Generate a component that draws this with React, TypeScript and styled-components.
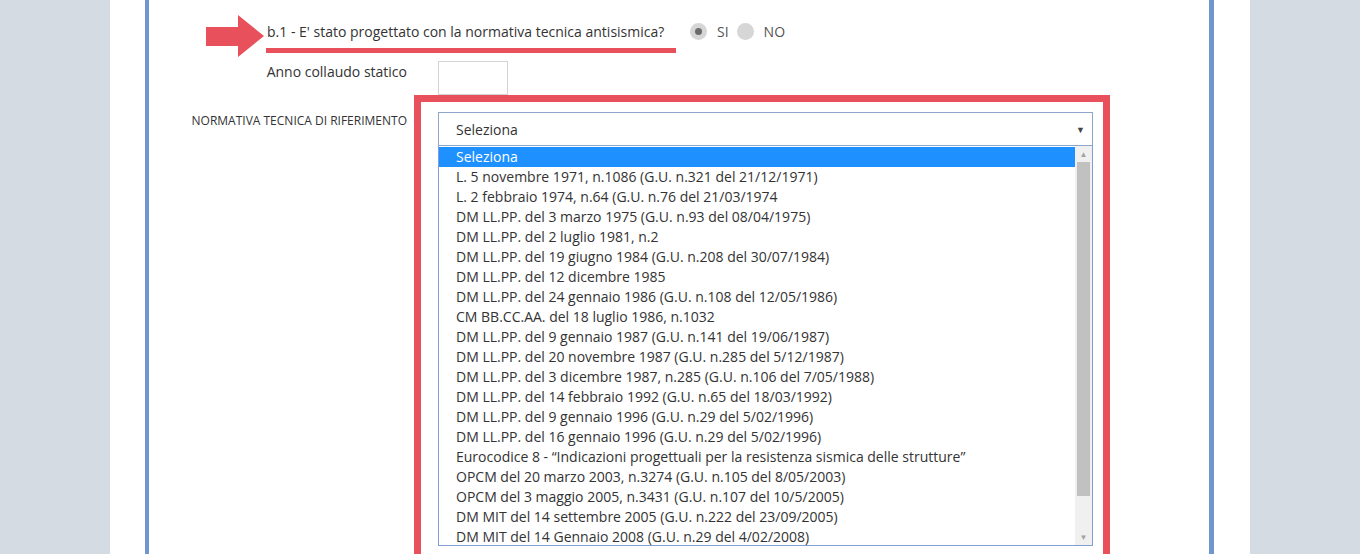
import { createGlobalStyle, styled } from "styled-components";

const GlobalStyle = createGlobalStyle`
  html, body {
    margin: 0;
    padding: 0;
    background: #d5dbe3;
    font-family: "Open Sans", "Liberation Sans", sans-serif;
    color: #333;
  }
  * { box-sizing: border-box; }
`;

const Page = styled.div`
  width: 1140px;
  height: 554px;
  margin: 0 auto;
  background: #fff;
  overflow: hidden;
`;

const Panel = styled.div`
  margin-left: 35px;
  width: 1069px;
  height: 100%;
  border-left: 4px solid #7096cf;
  border-right: 5px solid #7096cf;
  padding-top: 15px;
`;

const QuestionRow = styled.div`
  display: flex;
  align-items: flex-start;
  padding-left: 57px;
  height: 42px;
`;

const Question = styled.div`
  margin-left: 3px;
  margin-top: 7px;
  font-size: 14px;
  line-height: 20px;
  color: #333;
  &::after {
    content: "";
    display: block;
    margin-top: 6px;
    margin-left: -1px;
    width: 410px;
    height: 5px;
    background: #e8505b;
  }
`;

const Radios = styled.div`
  display: flex;
  align-items: center;
  margin-top: 6px;
  margin-left: 14px;
  height: 20px;
  font-size: 14px;
  color: #555;
`;

const Radio = styled.span<{ $checked?: boolean }>`
  width: 17px;
  height: 17px;
  border-radius: 50%;
  background: #d6d6d6;
  display: inline-flex;
  align-items: center;
  justify-content: center;
  margin-right: 10px;
  &::after {
    content: "";
    width: 7px;
    height: 7px;
    border-radius: 50%;
    background: ${(p) => (p.$checked ? "#6b6b6b" : "transparent")};
  }
`;

const RadioLabel = styled.span`
  margin-right: 8px;
`;

const FormRow = styled.div<{ $top: number }>`
  display: flex;
  align-items: flex-start;
  margin-top: ${(p) => p.$top}px;
`;

const Label = styled.div<{ $small?: boolean }>`
  width: 258px;
  text-align: right;
  font-size: ${(p) => (p.$small ? "12px" : "14px")};
  line-height: ${(p) => (p.$small ? "18px" : "20px")};
  padding-top: ${(p) => (p.$small ? "0" : "1px")};
  color: #333;
  flex-shrink: 0;
`;

const YearInput = styled.div`
  margin-left: 31px;
  width: 70px;
  height: 34px;
  border: 1px solid #d4d4d4;
  background: #fff;
`;

const SelectWrap = styled.div`
  position: relative;
  margin-left: 31px;
  width: 655px;
  height: 34px;
`;

const SelectBox = styled.div`
  height: 34px;
  border: 1px solid #8fa6cc;
  background: #fff;
  display: flex;
  align-items: center;
  justify-content: space-between;
  padding: 0 7px 0 17px;
  font-size: 14px;
  color: #333;
  position: relative;
  z-index: 1;
`;

const Caret = styled.span`
  font-size: 9px;
  color: #444;
`;

const Highlight = styled.div`
  position: absolute;
  top: -17px;
  left: -24px;
  width: 696px;
  height: 480px;
  border: 7px solid #e8505b;
  pointer-events: none;
`;

const DropList = styled.div`
  position: absolute;
  top: 34px;
  left: 0;
  width: 655px;
  height: 400px;
  border: 1px solid #7f9fd4;
  border-top: none;
  background: #fff;
  display: flex;
  z-index: 2;
`;

const Options = styled.div`
  flex: 1;
  padding-top: 1px;
`;

const Option = styled.div<{ $active?: boolean }>`
  height: 20px;
  line-height: 20px;
  padding-left: 17px;
  font-size: 14px;
  white-space: nowrap;
  background: ${(p) => (p.$active ? "#1e90ff" : "transparent")};
  color: ${(p) => (p.$active ? "#fff" : "#333")};
`;

const ScrollBar = styled.div`
  width: 17px;
  background: #f0f0f0;
  display: flex;
  flex-direction: column;
  align-items: center;
`;

const ScrollArrow = styled.span`
  height: 16px;
  font-size: 8px;
  line-height: 16px;
  color: #a3a3a3;
`;

const ScrollThumb = styled.div`
  width: 13px;
  height: 334px;
  background: #c1c1c1;
`;

const ScrollTrack = styled.div`
  flex: 1;
`;

const options = [
  "L. 5 novembre 1971, n.1086 (G.U. n.321 del 21/12/1971)",
  "L. 2 febbraio 1974, n.64 (G.U. n.76 del 21/03/1974",
  "DM LL.PP. del 3 marzo 1975 (G.U. n.93 del 08/04/1975)",
  "DM LL.PP. del 2 luglio 1981, n.2",
  "DM LL.PP. del 19 giugno 1984 (G.U. n.208 del 30/07/1984)",
  "DM LL.PP. del 12 dicembre 1985",
  "DM LL.PP. del 24 gennaio 1986 (G.U. n.108 del 12/05/1986)",
  "CM BB.CC.AA. del 18 luglio 1986, n.1032",
  "DM LL.PP. del 9 gennaio 1987 (G.U. n.141 del 19/06/1987)",
  "DM LL.PP. del 20 novembre 1987 (G.U. n.285 del 5/12/1987)",
  "DM LL.PP. del 3 dicembre 1987, n.285 (G.U. n.106 del 7/05/1988)",
  "DM LL.PP. del 14 febbraio 1992 (G.U. n.65 del 18/03/1992)",
  "DM LL.PP. del 9 gennaio 1996 (G.U. n.29 del 5/02/1996)",
  "DM LL.PP. del 16 gennaio 1996 (G.U. n.29 del 5/02/1996)",
  "Eurocodice 8 - “Indicazioni progettuali per la resistenza sismica delle strutture”",
  "OPCM del 20 marzo 2003, n.3274 (G.U. n.105 del 8/05/2003)",
  "OPCM del 3 maggio 2005, n.3431 (G.U. n.107 del 10/5/2005)",
  "DM MIT del 14 settembre 2005 (G.U. n.222 del 23/09/2005)",
  "DM MIT del 14 Gennaio 2008 (G.U. n.29 del 4/02/2008)",
];

function Arrow() {
  return (
    <svg width="58" height="42" viewBox="0 0 58 42">
      <polygon points="0,12 32,12 32,0 58,21 32,42 32,31 0,31" fill="#e8505b" />
    </svg>
  );
}

export default function App() {
  return (
    <>
      <GlobalStyle />
      <Page>
        <Panel>
          <QuestionRow>
            <Arrow />
            <Question>b.1 - E' stato progettato con la normativa tecnica antisismica?</Question>
            <Radios>
              <Radio $checked />
              <RadioLabel>SI</RadioLabel>
              <Radio />
              <RadioLabel>NO</RadioLabel>
            </Radios>
          </QuestionRow>
          <FormRow $top={4}>
            <Label>Anno collaudo statico</Label>
            <YearInput />
          </FormRow>
          <FormRow $top={17}>
            <Label $small>NORMATIVA TECNICA DI RIFERIMENTO</Label>
            <SelectWrap>
              <SelectBox>
                Seleziona
                <Caret>▼</Caret>
              </SelectBox>
              <DropList>
                <Options>
                  <Option $active>Seleziona</Option>
                  {options.map((o) => (
                    <Option key={o}>{o}</Option>
                  ))}
                </Options>
                <ScrollBar>
                  <ScrollArrow>▲</ScrollArrow>
                  <ScrollThumb />
                  <ScrollTrack />
                  <ScrollArrow>▼</ScrollArrow>
                </ScrollBar>
              </DropList>
              <Highlight />
            </SelectWrap>
          </FormRow>
        </Panel>
      </Page>
    </>
  );
}
